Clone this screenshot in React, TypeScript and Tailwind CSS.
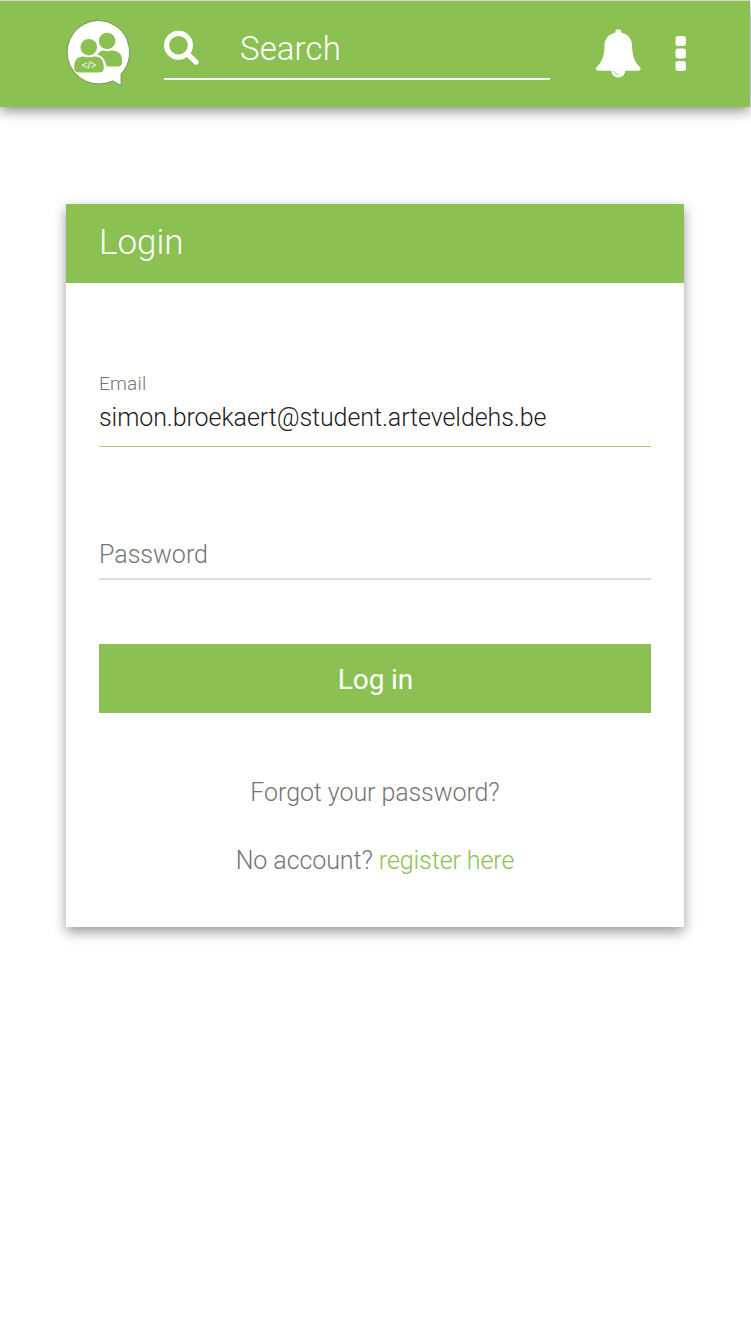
function Logo() {
  return (
    <svg className="block h-[68px] w-[66px] shrink-0" viewBox="0 0 66 68" fill="none">
      <path
        d="M33 1.4A31.8 31.8 0 1 0 47.8 61.8L56.1 66.8V54.9A31.8 31.8 0 0 0 33 1.4Z"
        fill="#fff"
        stroke="#63853f"
        strokeWidth="0.8"
      />
      <g fill="#8bc152">
        <circle cx="42.1" cy="22" r="8.3" />
        <path d="M32.6 35.4C34.2 32.6 37 31.2 40 31.7Q42.3 32.3 44.6 31.7C52 30.7 57 34.4 57 40.4V42.9Q57 47.4 52.5 47.4H41.6C40.4 40.4 37 36.9 32.6 35.4Z" />
        <circle cx="23.8" cy="28.2" r="8.3" />
        <path d="M9.2 48.4C9.2 40.9 13 37 19.5 37.7Q24 39 28.5 37.7C35 37 38.8 40.9 38.8 48.4V49.4Q38.8 53.4 33.5 53.4H14.5Q9.2 53.4 9.2 49.4Z" />
      </g>
      <text
        x="24"
        y="50"
        textAnchor="middle"
        fill="#fff"
        fontSize="10"
        fontWeight="400"
        fontFamily="Noto Sans, sans-serif"
      >
        &lt;/&gt;
      </text>
    </svg>
  );
}

function SearchIcon() {
  return (
    <svg className="block h-[36px] w-[36px] shrink-0" viewBox="0 0 36 36" fill="none" stroke="#fff">
      <circle cx="14.5" cy="16.2" r="11.9" strokeWidth="5.2" />
      <path d="M23.3 24.8L32 33.1" strokeWidth="5.2" strokeLinecap="round" />
    </svg>
  );
}

function BellIcon() {
  return (
    <svg className="block h-[50px] w-[46px] shrink-0" viewBox="0 0 46 50">
      <g fill="#fff">
        <circle cx="23.3" cy="3.2" r="3" />
        <path d="M23.3 3.6C32 3.6 37 9.3 37.1 17C37.3 27 39.5 33 44.8 37.9C46.5 39.8 45.4 41.7 43 41.7H3.6C1.2 41.7 0.1 39.8 1.8 37.9C7.1 33 9.3 27 9.5 17C9.6 9.3 14.6 3.6 23.3 3.6Z" />
        <path d="M16.3 40.5H30.3V41.5A7 6.9 0 0 1 16.3 41.5Z" />
      </g>
      <path d="M19.2 42A4.3 4.3 0 0 0 23.3 45.7" fill="none" stroke="#8bc152" strokeWidth="0.7" />
    </svg>
  );
}

function MoreIcon() {
  return (
    <svg className="block h-[36px] w-[11px] shrink-0" viewBox="0 0 11 36" fill="#fff">
      <rect x="0.5" y="0" width="10.4" height="9.9" rx="2.6" />
      <rect x="0.5" y="12.5" width="10.4" height="9.9" rx="2.6" />
      <rect x="0.5" y="25" width="10.4" height="9.9" rx="2.6" />
    </svg>
  );
}

export default function App() {
  return (
    <div className="min-h-[1335px] w-[751px] whitespace-nowrap bg-white font-['Roboto',sans-serif] font-light">
      <div className="relative z-10 h-px bg-[#d6d8d4]" />
      <header className="flex h-[106px] w-[750px] items-start bg-[#8bc152] pl-[65px] pt-[18px] shadow-[0_4px_12px_rgba(0,0,0,0.45)]">
        <Logo />
        <div className="ml-[33px] flex h-[61px] w-[386px] items-start border-b-2 border-white pt-[10px]">
          <SearchIcon />
          <span className="ml-[40px] pt-px text-[33px] leading-[38px] tracking-[0.1px] text-white">Search</span>
        </div>
        <div className="ml-[45px] mt-[10px]">
          <BellIcon />
        </div>
        <div className="ml-[34px] mt-[17px]">
          <MoreIcon />
        </div>
      </header>

      <main className="ml-[66px] mt-[97px] h-[723px] w-[618px] bg-white shadow-[0_5px_12px_rgba(0,0,0,0.4)]">
        <h1 className="h-[79px] bg-[#8bc152] px-[33px] text-[35px] leading-[77px] text-white">Login</h1>
        <div className="flex flex-col px-[33px] pt-[88px]">
          <label className="text-[19px] leading-[25px] tracking-[0.2px] text-[#757575]">Email</label>
          <div className="h-[51px] border-b border-[#a5d06f] pt-[5px] text-[25px] leading-[34px] tracking-[-0.08px] text-[#212121]">
            simon.broekaert@student.arteveldehs.be
          </div>
          <div className="mt-[90px] h-[43px] border-b-2 border-[#dcdcdc] text-[25px] leading-[35px] text-[#757575]">
            Password
          </div>
          <button className="mt-[64px] h-[69px] bg-[#8bc152] pl-px pt-[3px] text-center text-[28px] font-normal leading-[66px] tracking-[-0.1px] text-white">
            Log in
          </button>
          <a className="mt-[62px] text-center text-[25px] leading-[36px] tracking-[-0.08px] text-[#757575]">
            Forgot your password?
          </a>
          <p className="mt-[32px] text-center text-[25px] leading-[36px] tracking-[-0.08px] text-[#757575]">
            No account? <a className="text-[#8bc152]">register here</a>
          </p>
        </div>
      </main>
    </div>
  );
}
